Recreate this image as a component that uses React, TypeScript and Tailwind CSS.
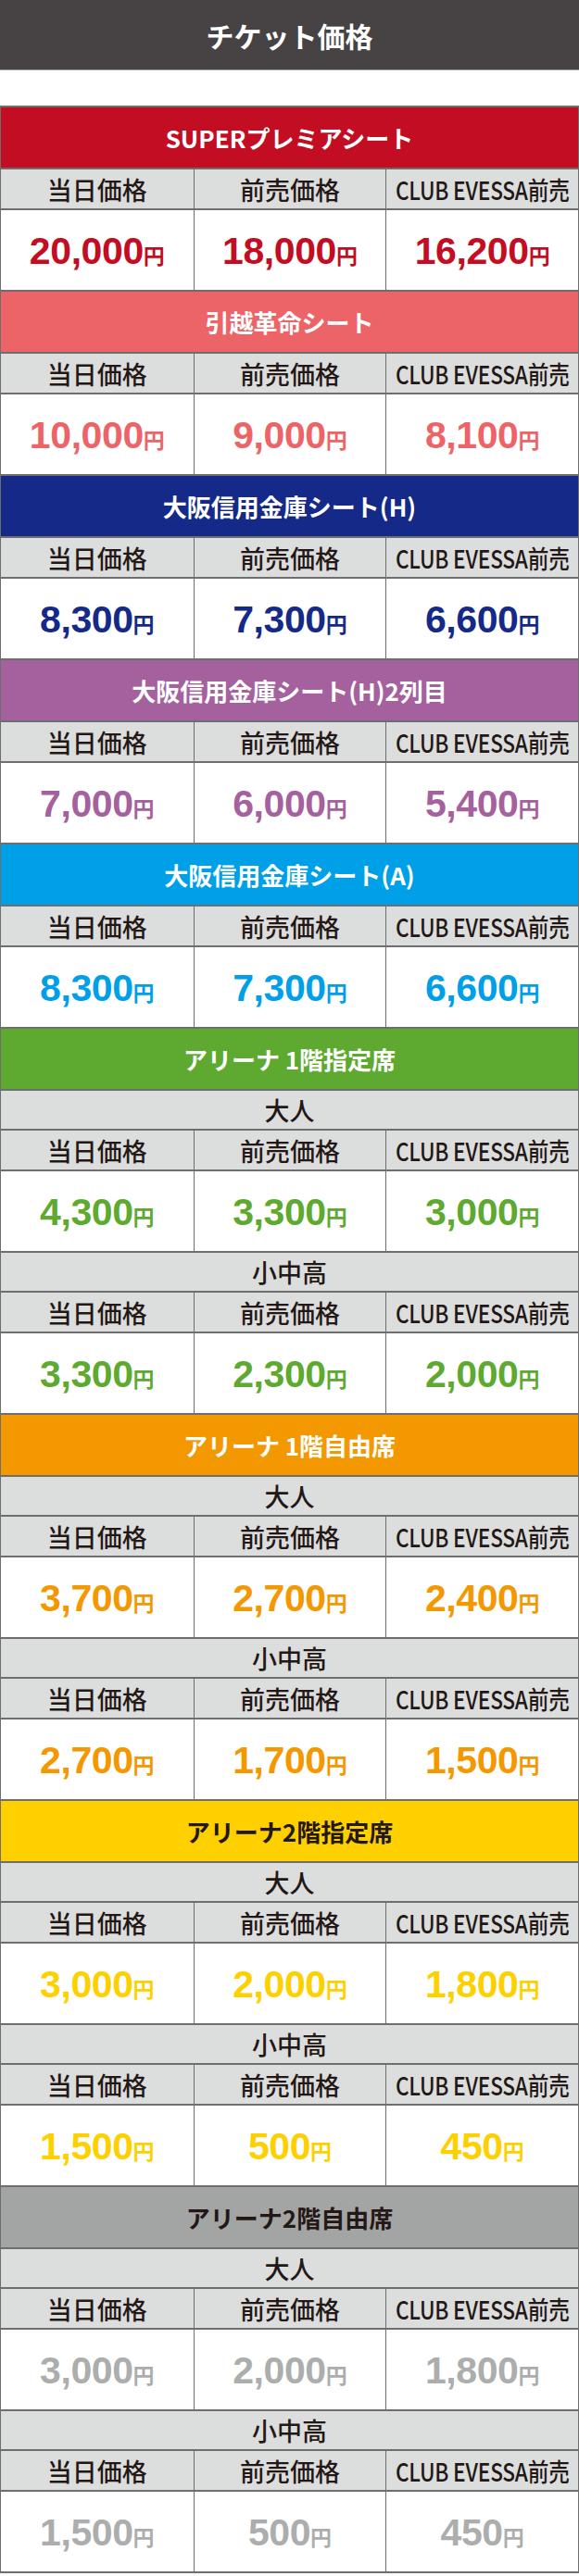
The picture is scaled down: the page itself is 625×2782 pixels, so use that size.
import React from "react";

type Prices = [string, string, string];

type Section = {
    title: string;
    bg: string;
    titleText: string;
    price: string;
    groups: { label?: string; prices: Prices }[];
};

const sections: Section[] = [
    { title: "SUPERプレミアシート", bg: "bg-[#c30d23]", titleText: "text-white", price: "text-[#c30d23]", groups: [{ prices: ["20,000", "18,000", "16,200"] }] },
    { title: "引越革命シート", bg: "bg-[#ec6468]", titleText: "text-white", price: "text-[#ec6468]", groups: [{ prices: ["10,000", "9,000", "8,100"] }] },
    { title: "大阪信用金庫シート(H)", bg: "bg-[#152a88]", titleText: "text-white", price: "text-[#152a88]", groups: [{ prices: ["8,300", "7,300", "6,600"] }] },
    { title: "大阪信用金庫シート(H)2列目", bg: "bg-[#a5619d]", titleText: "text-white", price: "text-[#a5619d]", groups: [{ prices: ["7,000", "6,000", "5,400"] }] },
    { title: "大阪信用金庫シート(A)", bg: "bg-[#00a0e9]", titleText: "text-white", price: "text-[#00a0e9]", groups: [{ prices: ["8,300", "7,300", "6,600"] }] },
    {
        title: "アリーナ 1階指定席", bg: "bg-[#5eaa31]", titleText: "text-white", price: "text-[#5eaa31]",
        groups: [{ label: "大人", prices: ["4,300", "3,300", "3,000"] }, { label: "小中高", prices: ["3,300", "2,300", "2,000"] }],
    },
    {
        title: "アリーナ 1階自由席", bg: "bg-[#f39800]", titleText: "text-white", price: "text-[#f39800]",
        groups: [{ label: "大人", prices: ["3,700", "2,700", "2,400"] }, { label: "小中高", prices: ["2,700", "1,700", "1,500"] }],
    },
    {
        title: "アリーナ2階指定席", bg: "bg-[#ffd000]", titleText: "text-[#231815]", price: "text-[#fdd000]",
        groups: [{ label: "大人", prices: ["3,000", "2,000", "1,800"] }, { label: "小中高", prices: ["1,500", "500", "450"] }],
    },
    {
        title: "アリーナ2階自由席", bg: "bg-[#a3a4a4]", titleText: "text-[#231815]", price: "text-[#acadad]",
        groups: [{ label: "大人", prices: ["3,000", "2,000", "1,800"] }, { label: "小中高", prices: ["1,500", "500", "450"] }],
    },
];

function HeaderRow() {
    return (
        <div className="grid grid-cols-3 h-[44px] border-t-2 border-[#6f6e6e] bg-[#dcdddd] text-[#231815] text-[27px] font-medium leading-none">
            <div className="flex items-center justify-center">当日価格</div>
            <div className="flex items-center justify-center border-l border-[#6f6e6e]">前売価格</div>
            <div className="flex items-center justify-center border-l border-[#6f6e6e] overflow-hidden">
                <span className="inline-block whitespace-nowrap scale-x-[0.84] tracking-[-0.01em]">CLUB EVESSA前売</span>
            </div>
        </div>
    );
}

function PriceRow({ prices, color }: { prices: Prices; color: string }) {
    return (
        <div className="grid grid-cols-3 h-[88px] border-t-2 border-[#6f6e6e] bg-white">
            {prices.map((p, i) => (
                <div key={i} className={`flex items-center justify-center pt-[2px] ${i > 0 ? "border-l border-[#6f6e6e]" : ""}`}>
                    <span className={`font-bold leading-none whitespace-nowrap ${color}`}>
                        <span className="font-['Liberation_Sans',Arial,sans-serif] text-[41px] tracking-[-0.01em]">{p}</span>
                        <span className="text-[23px]">円</span>
                    </span>
                </div>
            ))}
        </div>
    );
}

export default function App() {
    return (
        <div className="w-[625px] bg-white font-['Noto_Sans_CJK_JP',sans-serif]">
            {/* title */}
            <div className="h-[76px] bg-[#474344] border-b border-[#9d9d9d] flex items-center justify-center">
                <h1 className="text-white text-[30px] font-bold leading-none">チケット価格</h1>
            </div>

            <div className="h-[38px]" />

            <div className="border-x border-b-2 border-[#6f6e6e]">
                {sections.map((s) => (
                    <div key={s.title}>
                        <div className={`h-[67px] border-t-2 border-[#6f6e6e] flex items-center justify-center ${s.bg}`}>
                            <span className={`text-[26px] font-bold leading-none whitespace-nowrap ${s.titleText}`}>{s.title}</span>
                        </div>
                        {s.groups.map((g, gi) => (
                            <div key={gi}>
                                {g.label && (
                                    <div className="h-[43px] border-t-2 border-[#6f6e6e] bg-[#dcdddd] flex items-center justify-center text-[27px] font-medium leading-none text-[#231815]">
                                        {g.label}
                                    </div>
                                )}
                                <HeaderRow />
                                <PriceRow prices={g.prices} color={s.price} />
                            </div>
                        ))}
                    </div>
                ))}
            </div>
        </div>
    );
}
